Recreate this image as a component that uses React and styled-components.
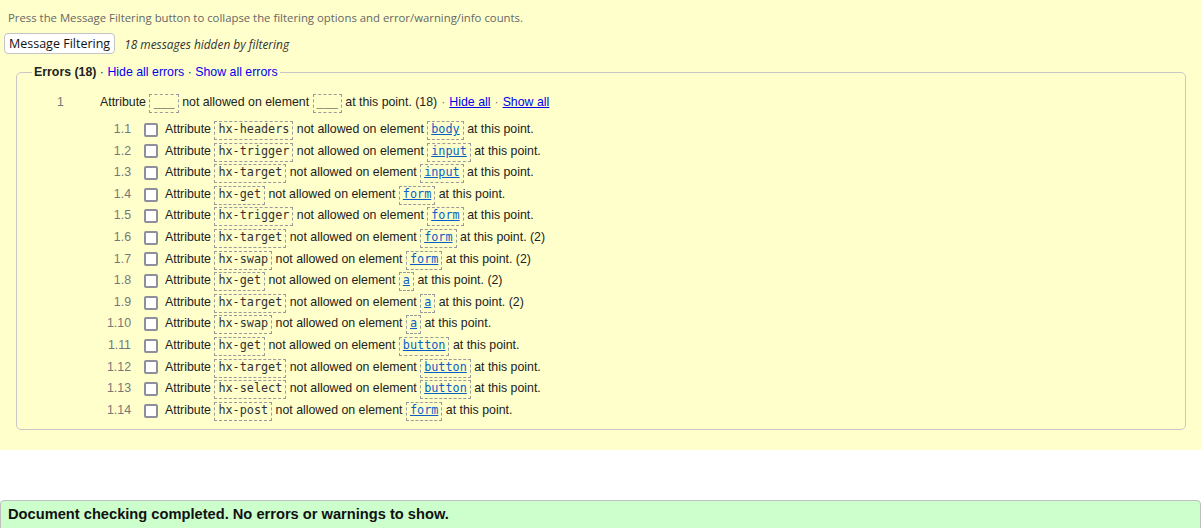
import React from "react"
import styled, { createGlobalStyle } from "styled-components"

const GlobalStyle = createGlobalStyle`
  body {
    margin: 0;
    background: #ffffff;
    font-family: "Liberation Sans", Arial, sans-serif;
    font-size: 12.35px;
    color: #222;
  }
`

const Panel = styled.div`
  background: #ffffcc;
  padding: 9px 0 20px 0;
`
const Hint = styled.p`
  margin: 0 0 0 8px;
  font-family: "Open Sans", sans-serif;
  font-size: 11.35px;
  line-height: 18px;
  color: #666;
`
const FilterBar = styled.div`
  display: flex;
  align-items: center;
  gap: 9px;
  margin: 6px 0 11px 4px;
`
const FilterButton = styled.button`
  font-family: "Open Sans", sans-serif;
  font-size: 12.5px;
  color: #111;
  background: #fff;
  border: 1px solid #c4c4c4;
  border-radius: 4px;
  padding: 0 4px;
  height: 21px;
`
const HiddenNote = styled.span`
  font-family: "Open Sans", sans-serif;
  font-style: italic;
  font-size: 11.9px;
  color: #333;
`
const Group = styled.fieldset`
  margin: 0 15px 0 16px;
  padding: 9px 0 8px 0;
  border: 1px solid #c8c8c8;
  border-radius: 5px;
`
const Legend = styled.legend`
  margin-left: 15px;
  padding: 0 2px;
  line-height: 14px;
  color: #222;
  b {
    font-weight: bold;
  }
`
const LegendLink = styled.a`
  color: #0000ee;
  text-decoration: none;
`
const Row = styled.div`
  display: flex;
  align-items: center;
  height: ${props => (props.$top ? "28px" : "21.6px")};
  line-height: ${props => (props.$top ? "28px" : "21.6px")};
  margin-bottom: ${props => (props.$top ? "3px" : "0")};
  white-space: nowrap;
`
const Text = styled.span`
  display: block;
`
const Num = styled.span`
  color: #777;
  text-align: ${props => (props.$top ? "left" : "right")};
  width: ${props => (props.$top ? "43px" : "114px")};
  padding-left: ${props => (props.$top ? "40px" : "0")};
  margin-right: ${props => (props.$top ? "0" : "13px")};
`
const Check = styled.span`
  box-sizing: border-box;
  width: 14px;
  height: 14px;
  border: 2px solid #8e8e9c;
  border-radius: 2px;
  background: #fff;
  margin-right: 7px;
`
const Code = styled.code`
  display: inline-block;
  font-family: "DejaVu Sans Mono", monospace;
  font-size: 11.8px;
  line-height: 15px;
  padding: 0 3px 2px;
  border: 1px dashed #9a9a9a;
  color: #333;
`
const ElemLink = styled.a`
  color: #0a5fc6;
  text-decoration: underline;
`
const TopLink = styled.a`
  color: #0000ee;
  text-decoration: underline;
`
const Sep = styled.span`
  color: #777;
  margin: 0 4px;
`
const Done = styled.div`
  margin-top: 50px;
  background: #ccffcc;
  border: 1px solid #bfbfbf;
  border-radius: 4px;
  padding: 5px 7px 8px;
  font-size: 14.67px;
  line-height: 17px;
  font-weight: bold;
  color: #111;
`

const messages = [
  ["hx-headers", "body"],
  ["hx-trigger", "input"],
  ["hx-target", "input"],
  ["hx-get", "form"],
  ["hx-trigger", "form"],
  ["hx-target", "form", 2],
  ["hx-swap", "form", 2],
  ["hx-get", "a", 2],
  ["hx-target", "a", 2],
  ["hx-swap", "a"],
  ["hx-get", "button"],
  ["hx-target", "button"],
  ["hx-select", "button"],
  ["hx-post", "form"],
]

const App = () => {
  return (
    <>
      <GlobalStyle />
      <Panel>
        <Hint>
          Press the Message Filtering button to collapse the filtering options and error/warning/info counts.
        </Hint>
        <FilterBar>
          <FilterButton>Message Filtering</FilterButton>
          <HiddenNote>18 messages hidden by filtering</HiddenNote>
        </FilterBar>
        <Group>
          <Legend>
            <b>Errors (18)</b> · <LegendLink href="#">Hide all errors</LegendLink> ·{" "}
            <LegendLink href="#">Show all errors</LegendLink>
          </Legend>
          <Row $top>
            <Num $top>1</Num>
            <Text>
              Attribute <Code>___</Code> not allowed on element <Code>___</Code> at this point. (18)
              <Sep>·</Sep>
              <TopLink href="#">Hide all</TopLink>
              <Sep>·</Sep>
              <TopLink href="#">Show all</TopLink>
            </Text>
          </Row>
          {messages.map(([attr, el, count], i) => (
            <Row key={i}>
              <Num>1.{i + 1}</Num>
              <Check />
              <Text>
                Attribute <Code>{attr}</Code> not allowed on element{" "}
                <Code>
                  <ElemLink href="#">{el}</ElemLink>
                </Code>{" "}
                at this point.{count ? ` (${count})` : ""}
              </Text>
            </Row>
          ))}
        </Group>
      </Panel>
      <Done>Document checking completed. No errors or warnings to show.</Done>
    </>
  )
}

export default App
